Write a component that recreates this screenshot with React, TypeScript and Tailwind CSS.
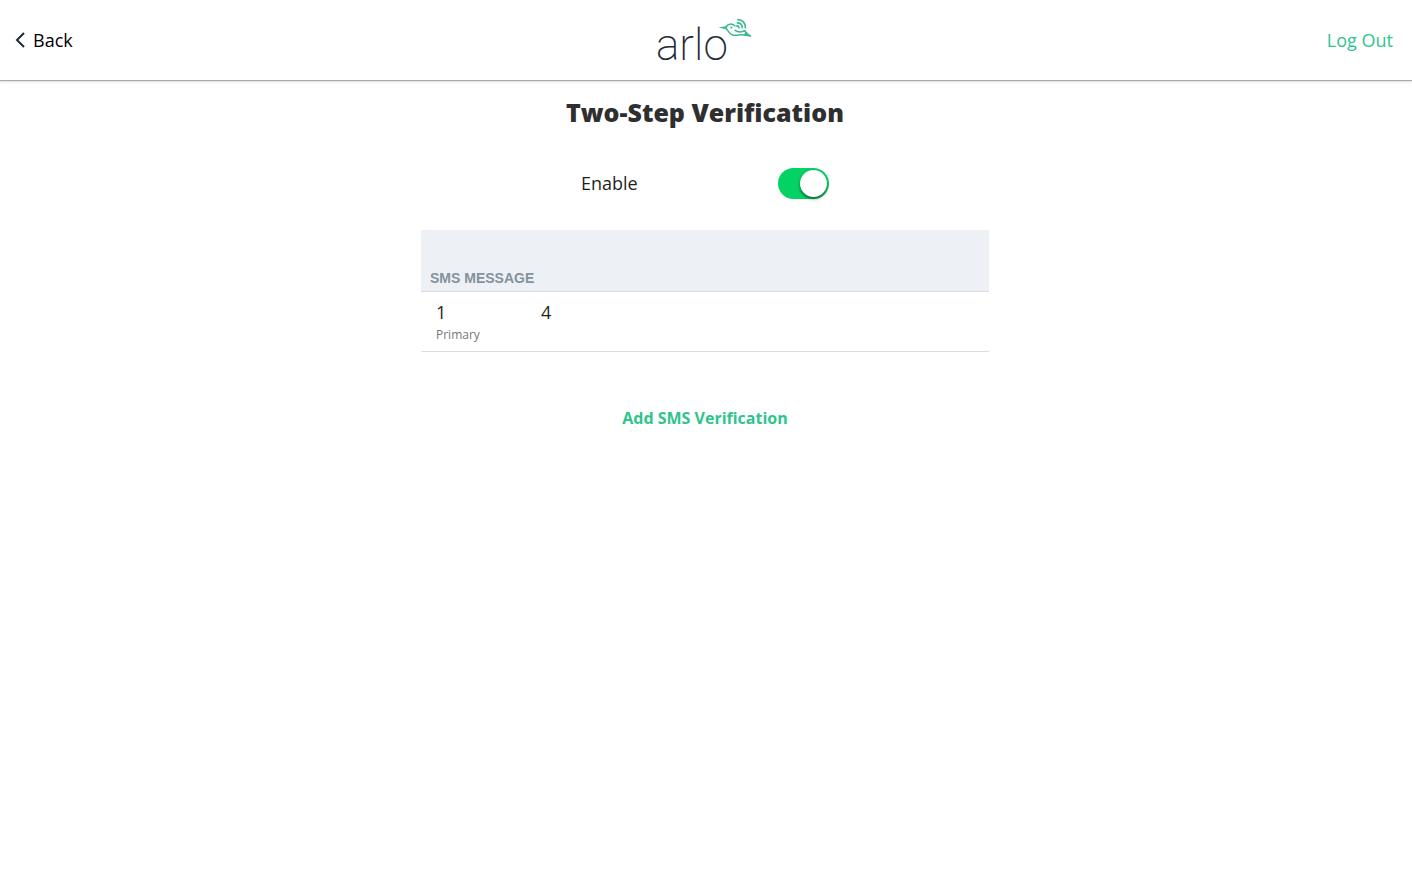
import { useState } from "react";

function ArloLogo() {
  return (
    <div role="img" aria-label="arlo" className="relative h-11 w-24">
      <span className="absolute top-1 left-0 font-['Roboto'] text-[44px] leading-[46px] font-extralight text-[#1d2b36]">
        arlo
      </span>
      <svg
        viewBox="0 0 34 20"
        className="absolute top-0 right-0 h-5 w-[34px]"
        fill="none"
        stroke="#3dba8c"
        strokeLinecap="round"
        strokeLinejoin="round"
      >
        <path d="M8 8.8 C9.6 5.8 13.8 5 17 8" strokeWidth="1.5" />
        <path d="M0.4 9.6 L9.4 8 L8.6 11.4 Z" fill="#3dba8c" stroke="none" />
        <path
          d="M8.4 10.8 C10 12.4 10.8 16 14.6 17 C18 18 20.6 16.6 24.2 16.8 C27 17 29.6 17.6 32.4 18 C29.6 16.6 28.6 14.6 26.6 12.6 C24.4 14.4 19.6 14.4 17 12.4"
          strokeWidth="1.5"
        />
        <path d="M27.2 14 L33.4 18.6 L26 17.4 Z" fill="#3dba8c" stroke="none" />
        <circle cx="13.4" cy="9.6" r="1.1" fill="#3dba8c" stroke="none" />
        <path d="M19 8 C20.2 8 20.8 8.6 21 9.6" strokeWidth="1.8" />
        <path d="M19.4 4.8 C22.4 4.8 24.2 6.8 24.2 9.6" strokeWidth="1.7" />
        <path d="M19.8 1.6 C24.4 1.6 27.6 5 27.4 9.8" strokeWidth="1.7" />
      </svg>
    </div>
  );
}

function Header() {
  return (
    <header className="grid h-[81px] grid-cols-3 items-center border-b border-[#a9a9a9] pr-[19px] pl-[15px] shadow-[0_1px_2px_rgba(0,0,0,0.15)]">
      <button type="button" className="flex items-center gap-2 justify-self-start text-lg text-black">
        <svg viewBox="0 0 10 16" className="h-4 w-2.5" fill="none" stroke="#1d2b36" strokeWidth="2">
          <path d="M9 1 L2 8 L9 15" />
        </svg>
        Back
      </button>
      <div className="justify-self-center">
        <ArloLogo />
      </div>
      <button type="button" className="justify-self-end text-lg text-[#2fc48d]">
        Log Out
      </button>
    </header>
  );
}

export default function App() {
  const [enabled, setEnabled] = useState(true);

  return (
    <div className="min-h-screen bg-white font-['Open_Sans',sans-serif]">
      <Header />
      <main className="flex flex-col items-center pr-0.5">
        <h1 className="mt-[15px] text-[25px] leading-8 font-extrabold text-[#2f2f2f]">
          Two-Step Verification
        </h1>

        <label className="mt-[39px] flex h-8 w-[248px] items-center justify-between text-lg text-[#1f1f1f]">
          Enable
          <input
            type="checkbox"
            role="switch"
            checked={enabled}
            onChange={(event) => setEnabled(event.target.checked)}
            className="flex h-[31px] w-[51px] cursor-pointer appearance-none items-center rounded-full bg-gray-300 px-0.5 before:size-[27px] before:rounded-full before:bg-white before:shadow-[0_2px_3px_rgba(0,0,0,0.5)] checked:justify-end checked:bg-[#04d265]"
          />
        </label>

        <section className="mt-[31px] w-full max-w-[568px]">
          <h2 className="flex h-[62px] items-end border-b border-[#dadde0] bg-[#edf1f6] px-[9px] pb-[3px] font-['Liberation_Sans',sans-serif] text-sm font-bold text-[#84929c]">
            SMS MESSAGE
          </h2>
          <ul>
            <li className="h-[60px] border-b border-[#dcdcdc] px-[15px] pt-2">
              <div className="flex text-lg leading-6 text-[#1f1f1f]">
                <span className="w-[105px]">1</span>
                <span>4</span>
              </div>
              <div className="text-xs leading-[22px] text-[#777777]">Primary</div>
            </li>
          </ul>
        </section>

        <button type="button" className="mt-[54px] text-base leading-6 font-bold text-[#2fc48d]">
          Add SMS Verification
        </button>
      </main>
    </div>
  );
}
